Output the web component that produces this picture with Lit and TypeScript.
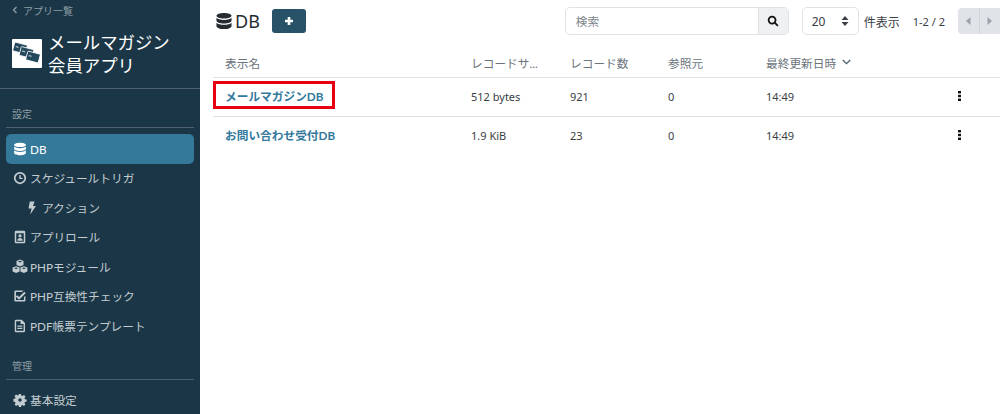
import { LitElement, html, css, svg } from 'lit';
import { customElement } from 'lit/decorators.js';

const icons: Record<string, unknown> = {
  db: svg`<path d="M8 .8c3.700 0 6.700 1.100 6.700 2.500S11.700 5.800 8 5.800 1.300 4.700 1.300 3.300 4.300.8 8 .8z"/><path d="M1.300 5.100C2.400 6.300 5.100 7 8 7s5.600-.7 6.700-1.900v2.600C14.700 9.100 11.700 10.200 8 10.200S1.300 9.100 1.300 7.700z"/><path d="M1.300 9.500C2.400 10.700 5.100 11.400 8 11.400s5.600-.7 6.700-1.900v3.100C14.700 14 11.700 15.200 8 15.200s-6.700-1.200-6.700-2.600z"/>`,
  clock: svg`<path fill-rule="evenodd" d="M8 1a7 7 0 1 1 0 14A7 7 0 0 1 8 1zm0 2a5 5 0 1 0 0 10A5 5 0 0 0 8 3z"/><path d="M7.200 4.500h1.500v3.200h2.300V9.200H7.200z"/>`,
  bolt: svg`<path d="M5.500 .5h5.500L9 5.800h3.500L6 15.500l1.500-7H4z"/>`,
  badge: svg`<path fill-rule="evenodd" d="M3.500 .8h9A1.500 1.500 0 0 1 14 2.300v11.400a1.500 1.500 0 0 1-1.500 1.500h-9A1.500 1.500 0 0 1 2 13.700V2.300A1.500 1.500 0 0 1 3.500.8zm.2 2.800v9.900h8.600V3.600z"/><circle cx="8" cy="6.700" r="1.900"/><path d="M4.900 12.200c0-2.200 1.300-3.200 3.100-3.200s3.100 1 3.100 3.200z"/>`,
  cubes: svg`<path fill-rule="evenodd" d="M8 .6l3.500 1.400v3.900L8 7.400 4.500 5.900V2zM6 2.600L8 3.400l2-.8-2-.8z"/><path fill-rule="evenodd" d="M4.100 7.200l3.500 1.400v3.900l-3.500 1.500L.6 12.500V8.600zM2.100 9.200l2 .8 2-.8-2-.8z"/><path fill-rule="evenodd" d="M11.900 7.200l3.500 1.400v3.900l-3.500 1.500-3.500-1.500V8.600zM9.900 9.200l2 .8 2-.8-2-.8z"/>`,
  check: svg`<path fill-rule="evenodd" d="M3 1.800h9L10.300 3.500H3.400v9.100h9.100V9.300l1.700-1.700v5.200a1.500 1.500 0 0 1-1.500 1.500H3a1.500 1.500 0 0 1-1.500-1.500V3.300A1.500 1.500 0 0 1 3 1.800z"/><path d="M4.700 7l2.200 2.200 6-6 1.600 1.600-7.600 7.600-3.800-3.800z"/>`,
  file: svg`<path fill-rule="evenodd" d="M3.500.8H10l3.700 3.700v9.200a1.500 1.500 0 0 1-1.500 1.500H3.500A1.500 1.500 0 0 1 2 13.700V2.300A1.500 1.500 0 0 1 3.500.8zm.1 1.700v11h8.500V5.800H8.700V2.500z"/><path d="M5 7.500h5.700v1.300H5zM5 10h5.700v1.300H5z"/>`,
  cog: svg`<path fill-rule="evenodd" d="M6.800 1h2.400l.4 2 1.100.5 1.800-1.100 1.700 1.700-1.100 1.800.5 1.100 2 .4v2.400l-2 .4-.5 1.100 1.100 1.800-1.700 1.700-1.800-1.100-1.100.5-.4 2H6.800l-.4-2-1.100-.5-1.800 1.100-1.700-1.700 1.100-1.800-.5-1.100-2-.4V6.800l2-.4.5-1.100-1.100-1.800 1.700-1.700 1.800 1.100 1.100-.5zM8 6a2 2 0 1 0 0 4 2 2 0 0 0 0-4z"/>`,
};

const icon = (name: string) =>
  html`<svg class="ic ${name}" viewBox="0 0 16 16" fill="currentColor">${icons[name]}</svg>`;

const menu = [
  { label: 'DB', icon: 'db', active: true },
  { label: 'スケジュールトリガ', icon: 'clock' },
  { label: 'アクション', icon: 'bolt', sub: true },
  { label: 'アプリロール', icon: 'badge' },
  { label: 'PHPモジュール', icon: 'cubes' },
  { label: 'PHP互換性チェック', icon: 'check' },
  { label: 'PDF帳票テンプレート', icon: 'file' },
];

const rows = [
  { name: 'メールマガジンDB', size: '512 bytes', count: '921', refs: '0', time: '14:49', mark: true },
  { name: 'お問い合わせ受付DB', size: '1.9 KiB', count: '23', refs: '0', time: '14:49' },
];

// three little cards of the app logo: [x, y] of each centre
const cards = [
  [8, 9],
  [14.5, 13.5],
  [21, 18],
];

@customElement('app-root')
export class AppRoot extends LitElement {
  static styles = css`
    :host {
      display: flex;
      width: 1000px;
      height: 414px;
      overflow: hidden;
      background: #fff;
      color: #3a4047;
      font-family: Lato, 'Noto Sans CJK JP', sans-serif;
      font-size: 11.7px;
    }
    .ic {
      flex: none;
    }

    /* sidebar */
    aside {
      width: 200px;
      height: 414px;
      flex: none;
      overflow: hidden;
      background: #1b3747;
      color: #c3ccd1;
    }
    .back {
      display: flex;
      align-items: center;
      gap: 5px;
      height: 20px;
      padding-left: 12px;
      color: #8f9ea7;
      font-size: 10px;
    }
    .back-arrow {
      width: 6px;
      height: 10px;
    }
    .brand {
      display: flex;
      align-items: center;
      gap: 6px;
      height: 68px;
      padding-left: 12px;
      border-bottom: 1px solid #4d626e;
      color: #fff;
      font-size: 17.4px;
      line-height: 23px;
    }
    .brand-logo {
      width: 30px;
      height: 29px;
      flex: none;
      margin-top: -1px;
      background: #fff;
      border-radius: 1px;
    }
    .section {
      margin: 0 6px;
      padding: 18px 6px 5px;
      border-bottom: 1px solid #4d626e;
      color: #8f9ea7;
      font-size: 10px;
      line-height: 15px;
    }
    nav {
      display: flex;
      flex-direction: column;
      padding: 6px 6px 0;
    }
    nav a {
      display: flex;
      align-items: center;
      gap: 3px;
      height: 29.5px;
      padding-left: 7px;
      border-radius: 5px;
      line-height: 14px;
    }
    nav a .ic {
      width: 14px;
      height: 14px;
      color: #c3ccd1;
    }
    nav a .ic.cubes {
      width: 16px;
      height: 16px;
      margin: 0 -1px;
    }
    nav a.active {
      background: #35799a;
      color: #fff;
    }
    nav a.active .ic {
      color: #fff;
    }
    nav a.sub {
      padding-left: 19px;
    }

    /* main */
    main {
      flex: 1;
      min-width: 0;
      padding-left: 13px;
    }
    .toolbar {
      display: flex;
      align-items: center;
      height: 42px;
      padding-left: 2px;
    }
    .title {
      display: flex;
      align-items: center;
      gap: 2px;
      color: #262b30;
      font-family: 'Noto Sans', sans-serif;
      font-size: 18px;
    }
    .title .ic {
      width: 18px;
      height: 18px;
    }
    .add {
      display: flex;
      align-items: center;
      justify-content: center;
      width: 34px;
      height: 24px;
      margin-left: 12px;
      background: #275267;
      border-radius: 3px;
      color: #fff;
    }
    .search {
      display: flex;
      height: 28px;
      width: 224px;
      margin-left: auto;
      box-sizing: border-box;
      border: 1px solid #dfe3e8;
      border-radius: 5px;
    }
    .search span {
      flex: 1;
      padding-left: 10px;
      color: #7d858c;
      line-height: 26px;
    }
    .search b {
      display: flex;
      align-items: center;
      justify-content: center;
      width: 29px;
      background: #eef0f2;
      border-left: 1px solid #dfe3e8;
      border-radius: 0 4px 4px 0;
      color: #111;
    }
    .search .ic {
      width: 12px;
      height: 12px;
    }
    .limit {
      display: flex;
      align-items: center;
      justify-content: space-between;
      width: 57px;
      height: 28px;
      margin-left: 13px;
      padding: 0 9px;
      box-sizing: border-box;
      border: 1px solid #dfe3e8;
      border-radius: 5px;
      font-family: 'Noto Sans', sans-serif;
      font-size: 12px;
    }
    .unit {
      margin-left: 5px;
      font-size: 12px;
    }
    .range {
      margin-left: 13px;
      font-family: 'Noto Sans', sans-serif;
      font-size: 11px;
    }
    .pager {
      display: flex;
      width: 42px;
      height: 26px;
      margin-left: 13px;
      background: #e0e3e7;
      border-radius: 4px 0 0 4px;
      color: #9aa1a8;
    }
    .pager span {
      display: flex;
      align-items: center;
      justify-content: center;
      flex: 1;
    }
    .pager span + span {
      border-left: 1px solid #d2d6da;
    }
    .head-row,
    .row {
      display: grid;
      grid-template-columns: 246px 99px 98px 98px 190px 1fr;
      align-items: center;
      padding-left: 12px;
    }
    .head-row {
      height: 30px;
      padding-top: 5px;
      color: #6b747c;
      white-space: nowrap;
    }
    .row {
      height: 36px;
      padding-bottom: 2px;
      border-top: 1px solid #dee2e6;
      font-family: 'Noto Sans', sans-serif;
      font-size: 11px;
    }
    .sort {
      display: flex;
      align-items: center;
      gap: 6px;
    }
    .name {
      position: relative;
      margin-top: -1px;
      color: #33799c;
      font-family: Lato, 'Noto Sans CJK JP', sans-serif;
      font-size: 11.7px;
      font-weight: 700;
    }
    .mark {
      position: absolute;
      left: -12px;
      top: -6px;
      width: 122px;
      height: 28px;
      box-sizing: border-box;
      border: 3px solid #e60012;
    }
    .dots {
      width: 3px;
      margin-left: 2px;
      height: 10px;
      color: #111;
    }
  `;

  render() {
    return html`
      <aside>
        <div class="back">
          <svg class="ic back-arrow" viewBox="0 0 6 10" fill="none" stroke="currentColor" stroke-width="1.300"><path d="M4.500 2L1.500 5l3 3"/></svg>
          <span>アプリ一覧</span>
        </div>
        <div class="brand">
          <svg class="brand-logo" viewBox="0 0 30 29">
            ${cards.map(
              ([x, y]) => svg`
                <g transform="rotate(15 ${x} ${y})">
                  <rect x=${x - 6.5} y=${y - 4.5} width="13" height="9" rx="1" fill="#23485c" stroke="#fff" stroke-width=".8"/>
                  <rect x=${x - 4.5} y=${y - 1} width="3" height="1.500" fill="#9db3bf"/>
                </g>
              `
            )}
          </svg>
          <div>メールマガジン<br />会員アプリ</div>
        </div>
        <div class="section">設定</div>
        <nav>
          ${menu.map(
            (m) => html`<a class="${m.active ? 'active' : ''} ${m.sub ? 'sub' : ''}">${icon(m.icon)}<span>${m.label}</span></a>`
          )}
        </nav>
        <div class="section">管理</div>
        <nav><a>${icon('cog')}<span>基本設定</span></a></nav>
      </aside>
      <main>
        <div class="toolbar">
          <div class="title">${icon('db')}<span>DB</span></div>
          <div class="add">
            <svg width="10" height="10" viewBox="0 0 10 10" fill="currentColor"><path d="M3.700 1h2.600v2.700H9v2.600H6.300V9H3.700V6.300H1V3.700h2.700z"/></svg>
          </div>
          <div class="search">
            <span>検索</span>
            <b>
              <svg class="ic" viewBox="0 0 16 16" fill="none" stroke="currentColor" stroke-width="2.400"><circle cx="6.800" cy="6.800" r="4.600"/><path d="M10.300 10.300L14.500 14.500"/></svg>
            </b>
          </div>
          <div class="limit">
            <span>20</span>
            <svg width="8" height="12" viewBox="0 0 8 12" fill="#3a4047"><path d="M4 1l3.500 4h-7zM4 11L.5 7h7z"/></svg>
          </div>
          <span class="unit">件表示</span>
          <span class="range">1-2 / 2</span>
          <div class="pager">
            <span><svg width="5" height="8" viewBox="0 0 5 8" fill="currentColor"><path d="M4.500 0v8L0 4z"/></svg></span>
            <span><svg width="5" height="8" viewBox="0 0 5 8" fill="currentColor"><path d="M.5 0v8L5 4z"/></svg></span>
          </div>
        </div>
        <div class="head-row">
          <span>表示名</span>
          <span>レコードサ...</span>
          <span>レコード数</span>
          <span>参照元</span>
          <span class="sort">最終更新日時
            <svg width="9" height="6" viewBox="0 0 9 6" fill="none" stroke="#4b6272" stroke-width="1.300"><path d="M.8 1l3.700 3.700L8.200 1"/></svg>
          </span>
        </div>
        ${rows.map(
          (r) => html`
            <div class="row">
              <div class="name">${r.mark ? html`<div class="mark"></div>` : ''}${r.name}</div>
              <div>${r.size}</div>
              <div>${r.count}</div>
              <div>${r.refs}</div>
              <div>${r.time}</div>
              <svg class="dots" viewBox="0 0 3 10" fill="currentColor"><rect y="0" width="3" height="2.400"/><rect y="3.800" width="3" height="2.400"/><rect y="7.600" width="3" height="2.400"/></svg>
            </div>
          `
        )}
      </main>
    `;
  }
}
